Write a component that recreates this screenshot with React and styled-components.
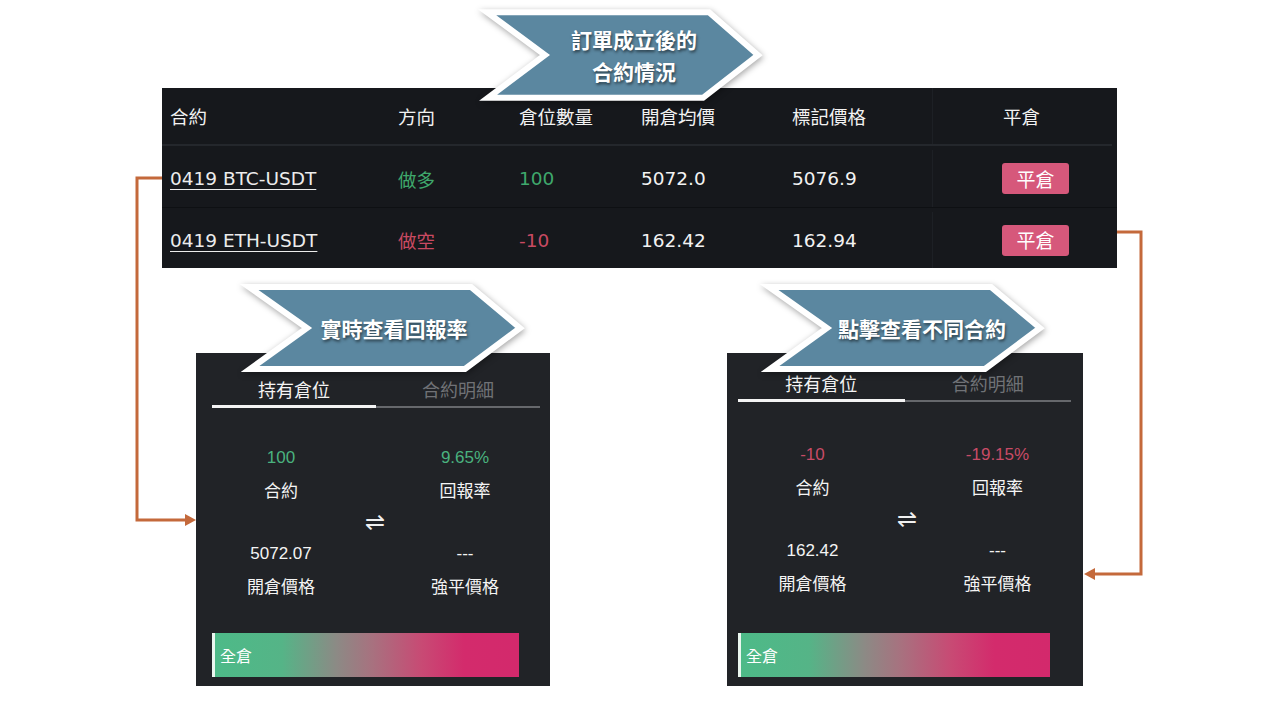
import React from "react";
import styled, { createGlobalStyle } from "styled-components";

const Global = createGlobalStyle`
  html, body { margin: 0; padding: 0; background: #ffffff; }
  * { box-sizing: border-box; }
`;

const CJK = `"Noto Sans CJK TC", "Noto Sans CJK SC", sans-serif`;

const Slide = styled.div`
  position: relative;
  width: 1280px;
  height: 720px;
  overflow: hidden;
  background: #ffffff;
  padding-top: 88px;
`;

/* ---------- Table ---------- */
const Table = styled.div`
  margin-left: 162px;
  width: 955px;
  height: 180px;
  background: #16181c;
  font-family: "DejaVu Sans", ${CJK};
  font-size: 18.5px;
  color: #f2f2f2;
  display: flex;
  flex-direction: column;
`;

const Row = styled.div`
  display: grid;
  grid-template-columns: 236px 121px 122px 151px 140px 1fr;
  height: ${(p) => p.$h}px;
  align-items: center;
  padding-top: ${(p) => p.$pt || 0}px;
  margin-right: ${(p) => (p.$head ? 5 : 0)}px;
  border-bottom: ${(p) => (p.$head ? "2px solid #24272c" : p.$line ? "1px solid #0e1013" : "none")};
`;

const Cell = styled.div`
  padding-left: ${(p) => (p.$first ? 8 : 0)}px;
  color: ${(p) => p.$color || "#f2f2f2"};
  white-space: nowrap;
`;

const ActionCell = styled.div`
  align-self: stretch;
  display: flex;
  align-items: center;
  padding-left: 70px;
  border-left: 1px solid #1d2025;
`;

const Symbol = styled.span`
  text-decoration: underline;
  text-underline-offset: 4px;
  text-decoration-thickness: 1px;
  color: #ececec;
`;

const CloseButton = styled.button`
  font-family: ${CJK};
  font-size: 19px;
  line-height: 30px;
  height: 31px;
  width: 67px;
  border: none;
  border-radius: 3px;
  background: #d6587b;
  color: #ffffff;
  padding: 0;
  margin-left: -1px;
`;

/* ---------- Panels ---------- */
const PanelsRow = styled.div`
  display: flex;
  gap: ${(p) => p.$gap}px;
  margin-top: 85px;
  padding-left: 196px;
`;

const Panel = styled.div`
  width: ${(p) => p.$w}px;
  height: 333px;
  background: #212327;
  display: flex;
  flex-direction: column;
  padding: ${(p) => p.$pt}px ${(p) => p.$pr}px 9px ${(p) => p.$pl}px;
  font-family: "Liberation Sans", ${CJK};
  color: #f1f1f1;
`;

const Tabs = styled.div`
  display: grid;
  grid-template-columns: 1fr 1fr;
`;

const Tab = styled.div`
  text-align: center;
  font-family: ${CJK};
  font-size: 18px;
  line-height: 24px;
  padding-bottom: 4px;
  color: ${(p) => (p.$active ? "#f4f4f4" : "#707276")};
  border-bottom: ${(p) => (p.$active ? "3px solid #f4f4f4" : "3px solid #66686c")};
  ${(p) => !p.$active && "border-bottom-width: 2px; padding-bottom: 5px;"}
`;

const Stats = styled.div`
  display: grid;
  grid-template-columns: 1fr 1fr;
  column-gap: 14px;
  margin-top: ${(p) => p.$mt}px;
  margin-left: ${(p) => -p.$pl}px;
  margin-right: ${(p) => -p.$pr}px;
`;

const Stat = styled.div`
  display: flex;
  flex-direction: column;
  align-items: center;
  gap: 8px;
`;

const Value = styled.div`
  font-size: 17px;
  line-height: 24px;
  color: ${(p) => p.$color || "#f4f4f4"};
`;

const Label = styled.div`
  font-family: ${CJK};
  font-size: 17px;
  line-height: 24px;
  color: #f4f4f4;
`;

const SwapRow = styled.div`
  grid-column: 1 / span 2;
  height: 40px;
  display: flex;
  align-items: center;
  justify-content: center;
  padding-left: 4px;
  font-family: "DejaVu Sans", sans-serif;
  font-size: 24px;
  color: #f0f0f0;
`;

const MarginBar = styled.div`
  margin-top: auto;
  margin-right: 21px;
  height: 44px;
  border-left: 3px solid #eaf6ef;
  background: linear-gradient(
    90deg,
    #4dba88 0%,
    #55b487 22%,
    #8c8a85 40%,
    #a8717f 52%,
    #c84a74 68%,
    #d32b6c 82%,
    #d3296c 100%
  );
  display: flex;
  align-items: center;
  padding-left: 5px;
  font-family: ${CJK};
  font-size: 16px;
  color: #ffffff;
`;

/* ---------- Overlays ---------- */
const Connectors = styled.svg`
  position: absolute;
  left: 0;
  top: 0;
  width: 1280px;
  height: 720px;
  pointer-events: none;
`;

const CalloutBox = styled.div`
  position: absolute;
  left: ${(p) => p.$x}px;
  top: ${(p) => p.$y}px;
  width: 282px;
  height: ${(p) => p.$h}px;
`;

const CalloutShape = styled.svg`
  position: absolute;
  inset: 0;
  width: 100%;
  height: 100%;
  overflow: visible;
  filter: drop-shadow(1px 2px 3px rgba(0, 0, 0, 0.35));
`;

const CalloutText = styled.div`
  position: absolute;
  inset: 0;
  display: flex;
  flex-direction: column;
  align-items: center;
  justify-content: center;
  padding-left: ${(p) => p.$pl}px;
  font-family: ${CJK};
  font-weight: 700;
  font-size: 21px;
  line-height: 32px;
  color: #ffffff;
  text-shadow: 1px 2px 3px rgba(0, 0, 0, 0.55);
  white-space: nowrap;
`;

function Callout({ x, y, h, pl, lines }) {
  return (
    <CalloutBox $x={x} $y={y} $h={h}>
      <CalloutShape viewBox="0 0 282 92" preserveAspectRatio="none">
        <polygon
          points="5,5 227,5 276,46 221,87 6,87 63,46"
          fill="#5b87a0"
          stroke="#ffffff"
          strokeWidth="6"
          strokeLinejoin="miter"
          vectorEffect="non-scaling-stroke"
        />
      </CalloutShape>
      <CalloutText $pl={pl}>
        {lines.map((l) => (
          <span key={l}>{l}</span>
        ))}
      </CalloutText>
    </CalloutBox>
  );
}

const GREEN = "#3fa86c";
const RED = "#c94a62";
const PGREEN = "#4ab27f";
const PRED = "#c84b66";

const positions = [
  { sym: "0419 BTC-USDT", dir: "做多", qty: "100", open: "5072.0", mark: "5076.9", color: GREEN, h: 62, line: true },
  { sym: "0419 ETH-USDT", dir: "做空", qty: "-10", open: "162.42", mark: "162.94", color: RED, h: 60 },
];

function PositionPanel({ w, pt, pl, pr, mt, qty, roi, price, color }) {
  return (
    <Panel $w={w} $pt={pt} $pl={pl} $pr={pr}>
      <Tabs>
        <Tab $active>持有倉位</Tab>
        <Tab>合約明細</Tab>
      </Tabs>
      <Stats $pl={pl} $pr={pr} $mt={mt}>
        <Stat>
          <Value $color={color}>{qty}</Value>
          <Label>合約</Label>
        </Stat>
        <Stat>
          <Value $color={color}>{roi}</Value>
          <Label>回報率</Label>
        </Stat>
        <SwapRow>⇌</SwapRow>
        <Stat>
          <Value>{price}</Value>
          <Label>開倉價格</Label>
        </Stat>
        <Stat>
          <Value>---</Value>
          <Label>強平價格</Label>
        </Stat>
      </Stats>
      <MarginBar>全倉</MarginBar>
    </Panel>
  );
}

export default function App() {
  return (
    <>
      <Global />
      <Slide>
        <Table>
          <Row $head $h={58}>
            <Cell $first>合約</Cell>
            <Cell>方向</Cell>
            <Cell>倉位數量</Cell>
            <Cell>開倉均價</Cell>
            <Cell>標記價格</Cell>
            <ActionCell>平倉</ActionCell>
          </Row>
          {positions.map((p) => (
            <Row key={p.sym} $h={p.h} $line={p.line} $pt={4}>
              <Cell $first>
                <Symbol>{p.sym}</Symbol>
              </Cell>
              <Cell $color={p.color}>{p.dir}</Cell>
              <Cell $color={p.color}>{p.qty}</Cell>
              <Cell>{p.open}</Cell>
              <Cell>{p.mark}</Cell>
              <ActionCell>
                <CloseButton>平倉</CloseButton>
              </ActionCell>
            </Row>
          ))}
        </Table>

        <PanelsRow $gap={177}>
          <PositionPanel w={354} pt={24} pl={16} pr={10} mt={38} qty="100" roi="9.65%" price="5072.07" color={PGREEN} />
          <PositionPanel w={356} pt={18} pl={11} pr={12} mt={41} qty="-10" roi="-19.15%" price="162.42" color={PRED} />
        </PanelsRow>

        <Connectors viewBox="0 0 1280 720">
          <g fill="none" stroke="#c4693b" strokeWidth="3">
            <path d="M162 178 H137 V520 H186" />
            <path d="M1117 232 H1141 V574 H1094" />
          </g>
          <g fill="#c4693b">
            <polygon points="185,514 196,520 185,526" />
            <polygon points="1095,568 1084,574 1095,580" />
          </g>
        </Connectors>

        <Callout x={482} y={7} h={96} pl={22} lines={["訂單成立後的", "合約情況"]} />
        <Callout x={244} y={282} h={92} pl={18} lines={["實時查看回報率"]} />
        <Callout x={764} y={282} h={92} pl={34} lines={["點擊查看不同合約"]} />
      </Slide>
    </>
  );
}
